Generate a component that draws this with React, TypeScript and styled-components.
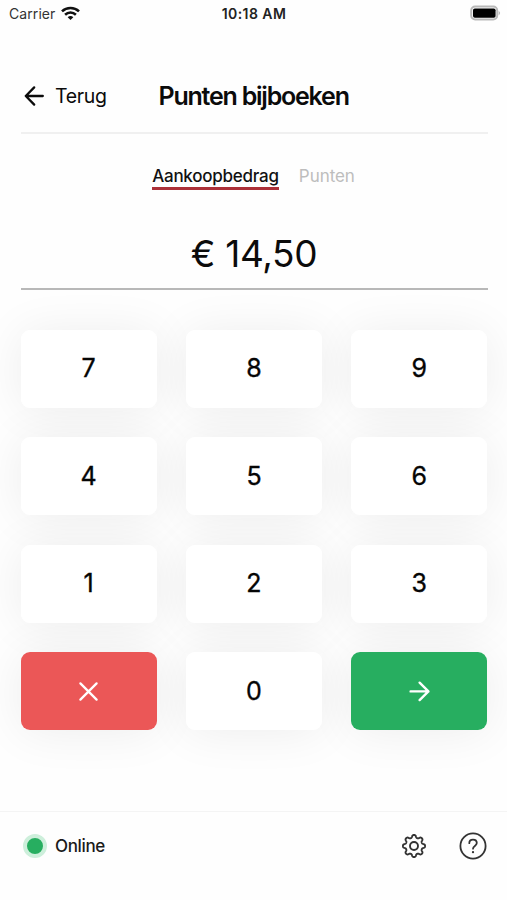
import React from "react";
import styled, { createGlobalStyle } from "styled-components";

const GlobalStyle = createGlobalStyle`
  * { box-sizing: border-box; }
  body { margin: 0; background: #fefefe; }
  button { border: 0; padding: 0; background: none; font: inherit; color: inherit; }
`;

const Screen = styled.div`
  width: 507px;
  height: 900px;
  display: flex;
  flex-direction: column;
  overflow: hidden;
  background: #fefefe;
  color: #0b0b0b;
  font-family: Inter, "Liberation Sans", sans-serif;
`;

const StatusBar = styled.div`
  height: 28px;
  flex: none;
  display: grid;
  grid-template-columns: 1fr auto 1fr;
  align-items: center;
  padding: 0 6px 0 9px;
  font-size: 14px;
  line-height: 28px;
`;

const Carrier = styled.span`
  display: flex;
  align-items: center;
  gap: 6px;
  color: #333;
  letter-spacing: 0.08px;

  svg {
    margin-top: -2px;
  }
`;

const Clock = styled.span`
  font-weight: 600;
  font-size: 14px;
  color: #222;
  letter-spacing: 0.45px;
  margin-right: 2px;
`;

const Battery = styled.svg`
  justify-self: end;
  margin-top: -2px;
`;

const Header = styled.header`
  flex: none;
  height: 78px;
  margin: 28px 19.5px 0 20.5px;
  display: grid;
  grid-template-columns: 138px 1fr;
  align-items: center;
  padding-top: 4px;
  border-bottom: 2px solid #f0f0f0;
`;

const Back = styled.button`
  display: flex;
  align-items: center;
  gap: 10px;
  padding-left: 2.5px;
  font-size: 19.5px;
  letter-spacing: -0.3px;
`;

const Title = styled.h1`
  margin: 0;
  font-size: 25px;
  font-weight: 600;
  letter-spacing: -1.22px;
  line-height: 30px;
`;

const Tabs = styled.nav`
  flex: none;
  display: flex;
  justify-content: center;
  gap: 20px;
  height: 57px;
  padding-top: 31px;
`;

const Tab = styled.button<{ $active?: boolean }>`
  height: 25px;
  font-size: 17px;
  line-height: 22px;
  letter-spacing: ${(p) => (p.$active ? "-0.24px" : "-0.05px")};
  font-weight: ${(p) => (p.$active ? 500 : 400)};
  color: ${(p) => (p.$active ? "#111" : "#bdbdbd")};
  border-bottom: 3px solid ${(p) => (p.$active ? "#ab3038" : "transparent")};
`;

const Amount = styled.div`
  flex: none;
  height: 99px;
  margin: 0 19.5px 0 20.5px;
  padding-top: 39px;
  text-align: center;
  font-size: 37px;
  line-height: 48px;
  letter-spacing: -0.3px;
  border-bottom: 2px solid #b8b8b8;
`;

const Keypad = styled.main`
  flex: 1;
  isolation: isolate;
  display: grid;
  grid-template-columns: repeat(3, 1fr);
  grid-auto-rows: 78px;
  gap: 29.5px 29px;
  padding: 39.6px 19.5px 0 20.5px;
`;

const Key = styled.button<{ $fill?: string }>`
  position: relative;
  display: flex;
  align-items: center;
  justify-content: center;
  padding-bottom: 1px;
  border-radius: 9px;
  background: ${(p) => p.$fill ?? "#fff"};
  color: ${(p) => (p.$fill ? "#fff" : "#050505")};
  font-size: 25px;
  font-weight: 400;
  -webkit-text-stroke: 0.35px currentColor;

  &::before {
    content: "";
    position: absolute;
    inset: 0;
    z-index: -1;
    border-radius: inherit;
    box-shadow: 0 2px 48px rgba(0, 0, 0, 0.07);
  }
`;

const Footer = styled.footer`
  flex: none;
  height: 89px;
  display: flex;
  align-items: flex-start;
  justify-content: space-between;
  padding: 19px 20px 0 23px;
  border-top: 1px solid #f4f4f4;
  background: #fefefe;
`;

const Online = styled.div`
  display: flex;
  align-items: center;
  gap: 8px;
  height: 30px;
  font-size: 17px;
  font-weight: 500;
  letter-spacing: -0.35px;
  color: #1a1a1a;
`;

const Dot = styled.span`
  width: 24px;
  height: 24px;
  border: 4.5px solid #cdefdb;
  border-radius: 50%;
  background: #27ae60;
`;

const Actions = styled.div`
  display: flex;
  align-items: center;
  height: 30px;
  gap: 31px;
`;

const IconButton = styled.button`
  display: flex;
`;

// Closed outline with eight rounded teeth, centred in a 28px box.
const gearOutline = (() => {
  const steps = 192;
  const points = Array.from({ length: steps }, (_, i) => {
    const a = (i / steps) * Math.PI * 2;
    const r = 9.75 + 1.4 * Math.tanh(1.6 * Math.cos(8 * a));
    return `${(14 + r * Math.sin(a)).toFixed(2)} ${(14 - r * Math.cos(a)).toFixed(2)}`;
  });
  return `M${points.join("L")}Z`;
})();

const GearIcon = () => (
  <svg width="28" height="28" viewBox="0 0 28 28" fill="none" stroke="#333" strokeWidth="1.9" strokeLinejoin="round">
    <path d={gearOutline} />
    <circle cx="14" cy="14" r="4" />
  </svg>
);

const HelpIcon = () => (
  <svg width="28" height="28" viewBox="0 0 28 28" fill="none" stroke="#333" strokeWidth="1.8" strokeLinecap="round">
    <circle cx="14" cy="14" r="12.6" />
    <path d="M10.3 11.2C10.3 9 11.9 7.7 14 7.7C16.2 7.7 17.8 9.1 17.8 11.1C17.8 13.9 14 14 14 16.7" />
    <circle cx="14" cy="20.2" r="1.15" fill="#333" stroke="none" />
  </svg>
);

const WifiIcon = () => (
  <svg width="19" height="15" viewBox="0 0 19 15" fill="none" stroke="#111" strokeWidth="2.6">
    <path d="M1 5.4C5.7.9 13.3.9 18 5.4" />
    <path d="M4.1 8.7C7.2 5.8 11.8 5.8 14.9 8.7" />
    <path d="M9.5 14L6.7 11.2C8.3 9.7 10.7 9.7 12.3 11.2Z" fill="#111" stroke="none" />
  </svg>
);

const ArrowLeft = () => (
  <svg width="22" height="22" viewBox="0 0 22 22" fill="none" stroke="#0b0b0b" strokeWidth="2.3" strokeLinecap="round" strokeLinejoin="round">
    <path d="M19.8 11H2.8M11.2 2.4L2.8 11L11.2 19.6" />
  </svg>
);

const ArrowRight = () => (
  <svg width="24" height="24" viewBox="0 0 24 24" fill="none" stroke="#fff" strokeWidth="2.4" strokeLinecap="round" strokeLinejoin="round">
    <path d="M3.6 12.4H21.4M12.6 3.7L21.4 12.4L12.6 21.1" />
  </svg>
);

const Cross = () => (
  <svg width="24" height="24" viewBox="0 0 24 24" fill="none" stroke="#fff" strokeWidth="2.3" strokeLinecap="round">
    <path d="M3.4 4.4L19.6 20.6M19.6 4.4L3.4 20.6" />
  </svg>
);

const digits = ["7", "8", "9", "4", "5", "6", "1", "2", "3"];

export default function App() {
  return (
    <Screen>
      <GlobalStyle />
      <StatusBar>
        <Carrier>
          Carrier <WifiIcon />
        </Carrier>
        <Clock>10:18 AM</Clock>
        <Battery width="31" height="16" viewBox="0 0 31 16">
          <rect x="1.2" y="1.5" width="26" height="13" rx="4" fill="#fff" stroke="#b9b9b9" strokeWidth="2" />
          <rect x="3" y="3.5" width="22.6" height="9.2" rx="1.8" fill="#000" />
          <path d="M28.6 5.7Q31.7 8 28.6 10.3Z" fill="#b9b9b9" />
        </Battery>
      </StatusBar>
      <Header>
        <Back>
          <ArrowLeft />
          Terug
        </Back>
        <Title>Punten bijboeken</Title>
      </Header>
      <Tabs>
        <Tab $active>Aankoopbedrag</Tab>
        <Tab>Punten</Tab>
      </Tabs>
      <Amount>€ 14,50</Amount>
      <Keypad>
        {digits.map((d) => (
          <Key key={d}>{d}</Key>
        ))}
        <Key $fill="#eb5757" aria-label="Wissen">
          <Cross />
        </Key>
        <Key>0</Key>
        <Key $fill="#27ae60" aria-label="Verder">
          <ArrowRight />
        </Key>
      </Keypad>
      <Footer>
        <Online>
          <Dot />
          Online
        </Online>
        <Actions>
          <IconButton aria-label="Instellingen">
            <GearIcon />
          </IconButton>
          <IconButton aria-label="Help">
            <HelpIcon />
          </IconButton>
        </Actions>
      </Footer>
    </Screen>
  );
}
